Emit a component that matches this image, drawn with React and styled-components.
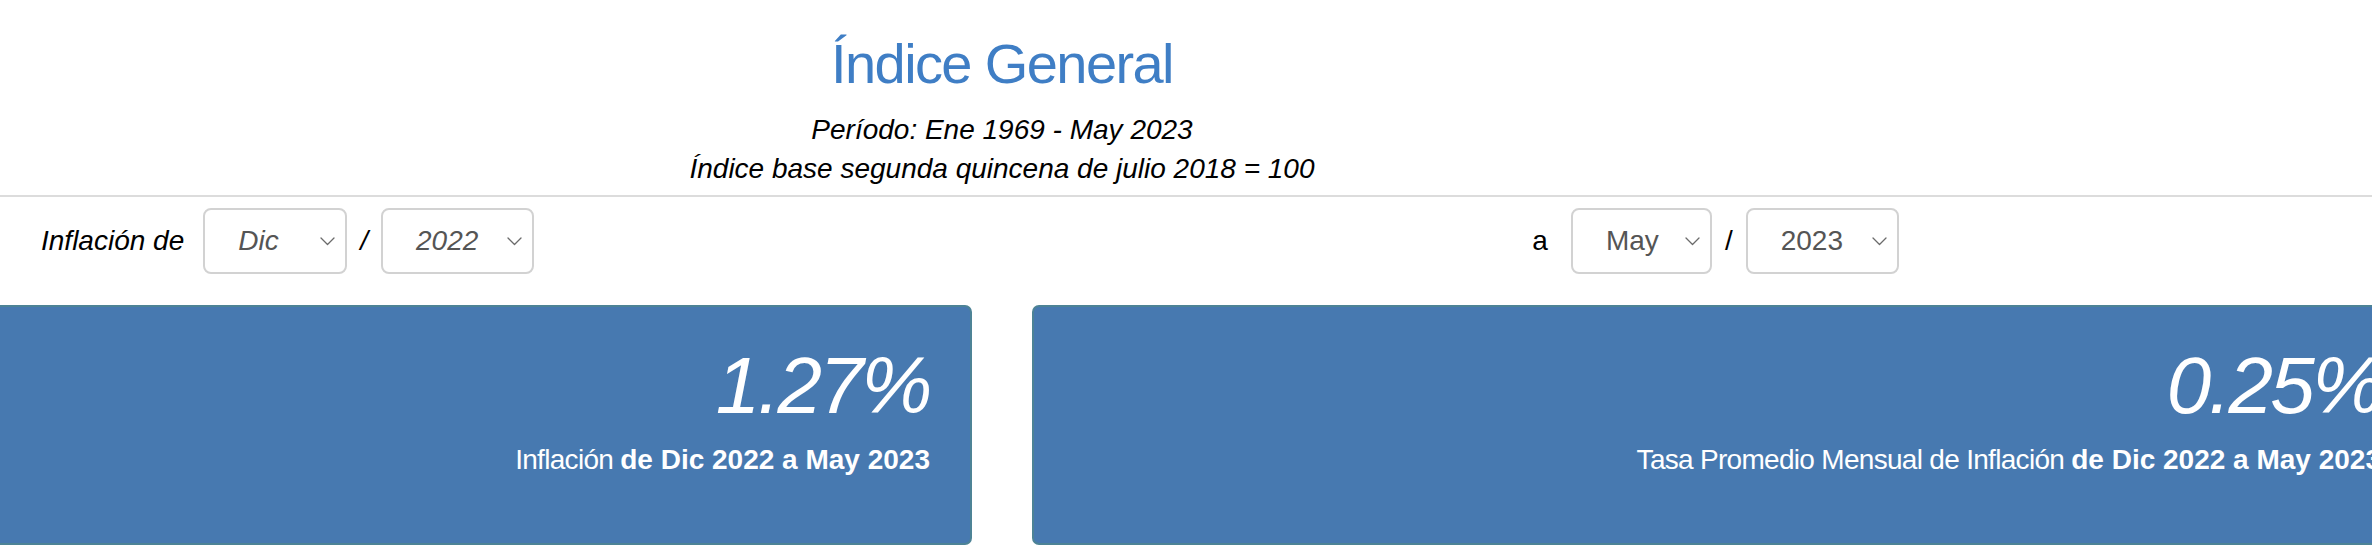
import styled, { createGlobalStyle } from "styled-components";

const GlobalStyle = createGlobalStyle`
  html,
  body {
    margin: 0;
    padding: 0;
    background: #ffffff;
  }
  body {
    font-family: "Liberation Sans", Arial, Helvetica, sans-serif;
    color: #000;
    overflow: hidden;
  }
`;

// the page is wider than the window and is shown scrolled sideways
const Viewport = styled.div`
  width: 100%;
  height: 546px;
  overflow: hidden;
`;

const Sheet = styled.main`
  width: 2902px;
  margin-left: -449px;
`;

const Header = styled.header`
  text-align: center;
  padding-top: 32px;
  padding-bottom: 7px;
  border-bottom: 2px solid #dcdcdc;
`;

const Title = styled.h1`
  margin: 0 0 14px;
  font-size: 56px;
  line-height: 64px;
  font-weight: 400;
  letter-spacing: -1.6px;
  color: #3f7ec5;
`;

const Sub = styled.p`
  margin: 0;
  font-size: 28px;
  line-height: 39px;
  font-style: italic;
`;

const Controls = styled.section`
  display: grid;
  grid-template-columns: 1fr 1fr;
  padding-top: 11px;
`;

const Group = styled.div`
  display: flex;
  align-items: center;
  justify-content: center;
  padding-left: ${(p) => p.$shift || 0}px;
  padding-right: ${(p) => p.$pull || 0}px;
  font-size: 28px;
  font-style: ${(p) => (p.$italic ? "italic" : "normal")};
`;

const Label = styled.span`
  margin-right: ${(p) => p.$gap}px;
`;

const Slash = styled.span`
  margin: 0 13px;
`;

const Select = styled.div`
  box-sizing: border-box;
  width: ${(p) => p.$w}px;
  height: 66px;
  display: flex;
  align-items: center;
  justify-content: space-between;
  padding: 0 10px 0 33px;
  border: 2px solid #d2d2d2;
  border-radius: 8px;
  background: #fff;
  color: #555;
  font-size: 28px;
`;

const Chevron = () => (
  <svg width="15" height="9" viewBox="0 0 15 9" fill="none">
    <polyline
      points="1,1 7.5,7.5 14,1"
      stroke="#6b6b6b"
      strokeWidth="1.3"
      strokeLinecap="round"
      strokeLinejoin="round"
    />
  </svg>
);

const Cards = styled.section`
  display: grid;
  grid-template-columns: 1fr 1fr;
  padding-top: 31px;
`;

const Card = styled.div`
  box-sizing: border-box;
  height: 240px;
  margin: 0 30px;
  padding: 34px 40px 0 0;
  background: #4779b0;
  border: 2px solid #4d8396;
  border-radius: 7px;
  color: #fff;
  text-align: right;
`;

const Big = styled.div`
  font-size: 80px;
  line-height: 90px;
  font-style: italic;
  letter-spacing: -2.5px;
  margin-bottom: 11px;
`;

const Caption = styled.div`
  font-size: 28px;
  line-height: 36px;
  letter-spacing: -0.7px;

  b {
    font-weight: 700;
    letter-spacing: 0;
  }
`;

const Picker = ({ value, width }) => (
  <Select $w={width}>
    <span>{value}</span>
    <Chevron />
  </Select>
);

export default function App() {
  return (
    <>
      <GlobalStyle />
      <Viewport>
        <Sheet>
          <Header>
            <Title>Índice General</Title>
            <Sub>Período: Ene 1969 - May 2023</Sub>
            <Sub>Índice base segunda quincena de julio 2018 = 100</Sub>
          </Header>

          <Controls>
            <Group $italic $shift={22}>
              <Label $gap={19}>Inflación de</Label>
              <Picker value="Dic" width={144} />
              <Slash>/</Slash>
              <Picker value="2022" width={153} />
            </Group>
            <Group $pull={24}>
              <Label $gap={23}>a</Label>
              <Picker value="May" width={141} />
              <Slash>/</Slash>
              <Picker value="2023" width={153} />
            </Group>
          </Controls>

          <Cards>
            <Card>
              <Big>1.27%</Big>
              <Caption>
                Inflación <b>de Dic 2022 a May 2023</b>
              </Caption>
            </Card>
            <Card>
              <Big>0.25%</Big>
              <Caption>
                Tasa Promedio Mensual de Inflación <b>de Dic 2022 a May 2023</b>
              </Caption>
            </Card>
          </Cards>
        </Sheet>
      </Viewport>
    </>
  );
}
